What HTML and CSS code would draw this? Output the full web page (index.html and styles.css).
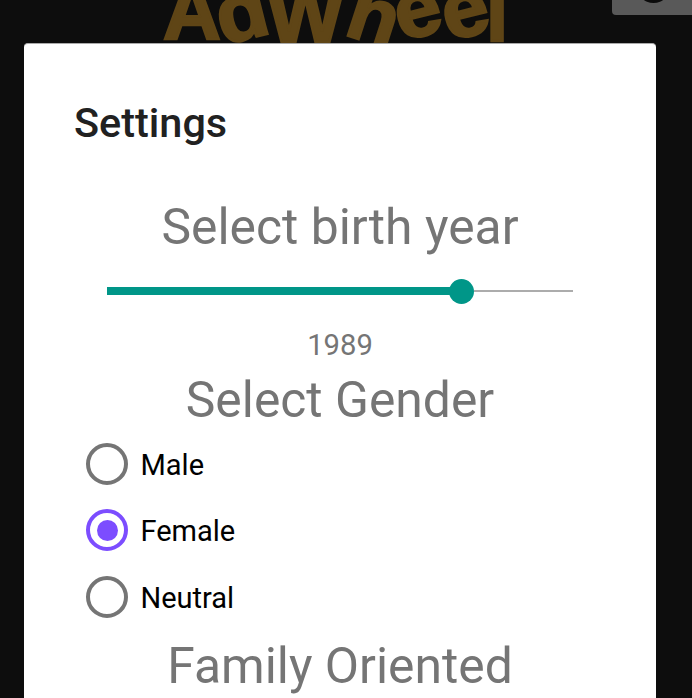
FILE: index.html
```
<!DOCTYPE html>
<html lang="en">
<head>
<meta charset="utf-8">
<title>AdWheel Settings</title>
<link rel="stylesheet" href="styles.css">
</head>
<body>
<div class="backdrop" aria-hidden="true">
  <svg class="logo" width="360" height="46" viewBox="155 0 360 46">
    <text transform="translate(163 38.500)">A</text>
    <text transform="translate(223 45) rotate(-14) scale(1.05 1)">d</text>
    <text transform="translate(267 41.500) scale(1.02 1)">W</text>
    <text transform="translate(342.500 34) rotate(18) scale(1.02 1)">h</text>
    <text transform="translate(401 41) rotate(-14) scale(1.04 1)">e</text>
    <text transform="translate(448.500 41) rotate(-14) scale(1.04 1)">e</text>
    <text transform="translate(486 41)">l</text>
  </svg>
  <div class="corner-button"><svg width="80" height="15" viewBox="0 0 80 15"><circle cx="41.500" cy="-14" r="17"/></svg></div>
</div>
<main class="dialog">
  <h1 class="title">Settings</h1>
  <h2 class="heading birth">Select birth year</h2>
  <div class="slider"><div class="fill"></div><div class="thumb"></div><div class="rest"></div></div>
  <p class="year">1989</p>
  <h2 class="heading gender">Select Gender</h2>
  <div class="options">
    <label class="option"><span class="radio"></span><span class="label male">Male</span></label>
    <label class="option"><span class="radio checked"></span><span class="label female">Female</span></label>
    <label class="option"><span class="radio"></span><span class="label neutral">Neutral</span></label>
  </div>
  <h2 class="heading family">Family Oriented</h2>
</main>
</body>
</html>
```
FILE: styles.css
```
* { box-sizing: border-box; }
html, body { margin: 0; height: 100%; overflow: hidden; }
body { background: #0d0d0d; font-family: Roboto, sans-serif; }
.backdrop { height: 43px; display: flex; align-items: flex-start; overflow: hidden; }
.logo { flex: none; margin-left: 155px; fill: #5f4516; stroke: #5f4516; stroke-width: 2.5px; font: bold 80px "Liberation Sans", sans-serif; filter: blur(.5px); }
.corner-button { flex: none; width: 80px; height: 15px; margin-left: 97px; background: #595959; border-radius: 0 0 0 4px; overflow: hidden; }
.corner-button svg { display: block; fill: #0b0b0b; }
.dialog { width: 632px; height: 680px; margin-left: 24px; padding: 54px 50px 0; background: #fff; border-top: 1px solid #aaa; border-radius: 4px; }
.title { margin: 0; height: 50px; font-size: 41.4px; line-height: 50px; font-weight: 500; color: #212121; }
.heading { margin: 0; height: 58px; font-size: 49.8px; line-height: 58px; font-weight: 400; color: #757575; text-align: center; white-space: nowrap; }
.birth { margin-top: 50px; }
.slider { display: flex; align-items: center; height: 26px; margin: 22px 33px 0; }
.fill { width: 344.5px; height: 8px; background: #009688; }
.thumb { flex: none; width: 25px; height: 25px; margin-left: -3px; border-radius: 50%; background: #009688; }
.rest { flex: 1; height: 2px; background: #acacac; }
.year { margin: 23px 0 0; height: 36px; font-size: 29.2px; line-height: 37px; color: #757575; text-align: center; }
.gender { margin-top: 8px; }
.options { margin: 1.5px 0 0 12px; }
.option { display: flex; align-items: center; height: 66.5px; }
.radio { display: flex; align-items: center; justify-content: center; width: 42px; height: 42px; border: 4px solid #757575; border-radius: 50%; }
.radio.checked { border-color: #7c4dff; }
.checked::after { content: ""; width: 21px; height: 21px; border-radius: 50%; background: #7c4dff; }
.label { margin: 2.5px 0 0 12.5px; font-size: 29px; line-height: 36px; color: #000; }
.female { margin-top: 1px; }
.family { margin-top: 7px; }
```
